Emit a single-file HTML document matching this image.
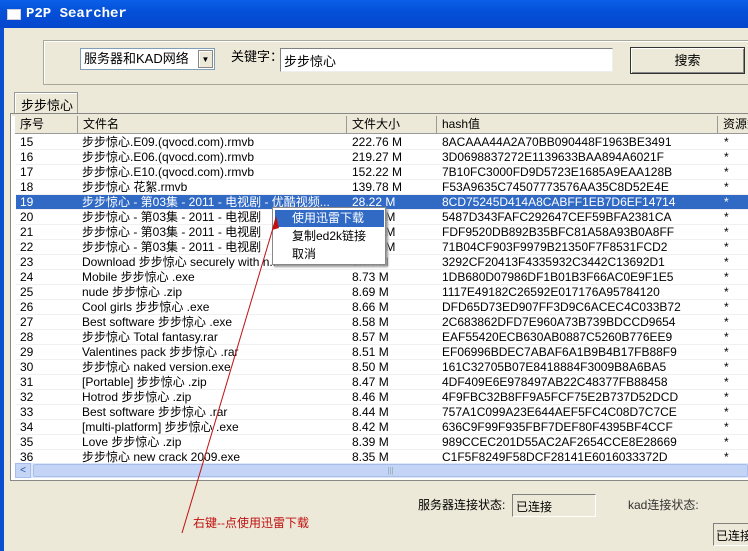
<!DOCTYPE html>
<html><head><meta charset="utf-8"><style>
*{margin:0;padding:0;box-sizing:border-box}
body{width:748px;height:551px;overflow:hidden;background:#ECE9D8;position:relative;font-family:"Liberation Sans","Noto Sans CJK SC",sans-serif;font-size:12px;color:#000}
.a{position:absolute;white-space:nowrap;overflow:hidden}
#title{left:0;top:0;width:748px;height:28px;background:linear-gradient(#0A5FE8,#0550D8 40%,#0347CC);color:#fff;font-family:"Liberation Mono","Noto Sans CJK SC",monospace;font-weight:bold;font-size:14px;line-height:28px;padding-left:26px}
.row{position:absolute;left:16px;width:732px;height:15px;line-height:15px;border-bottom:1px solid #f0f0f0;white-space:nowrap;overflow:hidden}
.row span{position:absolute;top:0}
.sel{background:#316AC5;color:#fff}
.hd{position:absolute;top:116px;height:18px;line-height:17px;background:#ECE9D8;border-right:1px solid #9a9a9a;border-bottom:1px solid #9a9a9a;padding-left:5px;white-space:nowrap;overflow:hidden}
</style></head><body>
<div id="title" class="a">P2P Searcher</div>
<div class="a" style="left:7px;top:9px;width:14px;height:11px;background:#fff;border:1px solid #ccd"></div>
<div class="a" style="left:0;top:28px;width:4px;height:523px;background:#0A4FD0"></div>
<div class="a" style="left:43px;top:40px;width:720px;height:45px;border:1px solid #a8a89a;border-right:none;box-shadow:inset 1px 1px #fff"></div>
<div class="a" style="left:80px;top:48px;width:135px;height:22px;background:#fff;border:1px solid #7f9db9;line-height:20px;padding-left:3px;font-size:13px">服务器和KAD网络</div>
<div class="a" style="left:198px;top:50px;width:15px;height:18px;background:#ECE9D8;border:1px solid #888;box-shadow:inset 1px 1px #fff;font-size:8px;text-align:center;line-height:17px">▼</div>
<div class="a" style="left:231px;top:50px;line-height:14px;font-size:13px">关键字：</div>
<div class="a" style="left:280px;top:48px;width:333px;height:24px;background:#fff;border:1px solid #808080;border-right-color:#eee;border-bottom-color:#eee;padding:2px 3px;font-size:13px">步步惊心</div>
<div class="a" style="left:630px;top:47px;width:115px;height:27px;background:#ECE9D8;border:1px solid #333;box-shadow:inset 1px 1px #fff,inset -1px -1px #888;text-align:center;line-height:25px;font-size:13px">搜索</div>
<div class="a" style="left:14px;top:92px;width:64px;height:22px;border:1px solid #999;border-bottom:none;box-shadow:inset 1px 1px #fff;padding:2px 6px;font-size:13px">步步惊心</div>
<div class="a" style="left:10px;top:113px;width:738px;height:368px;border:1px solid #888;border-right:none;background:#fff"></div>
<div class="a" style="left:12px;top:114px;width:736px;height:2px;background:#ECE9D8"></div>
<div class="hd" style="left:15px;width:63px">序号</div>
<div class="hd" style="left:78px;width:269px">文件名</div>
<div class="hd" style="left:347px;width:90px">文件大小</div>
<div class="hd" style="left:437px;width:281px">hash值</div>
<div class="hd" style="left:718px;width:40px">资源数</div>
<div id="rows"></div>
<script>
var d=[["15","步步惊心.E09.(qvocd.com).rmvb","222.76 M","8ACAAA44A2A70BB090448F1963BE3491"],
["16","步步惊心.E06.(qvocd.com).rmvb","219.27 M","3D0698837272E1139633BAA894A6021F"],
["17","步步惊心.E10.(qvocd.com).rmvb","152.22 M","7B10FC3000FD9D5723E1685A9EAA128B"],
["18","步步惊心 花絮.rmvb","139.78 M","F53A9635C74507773576AA35C8D52E4E"],
["19","步步惊心 - 第03集 - 2011 - 电视剧 - 优酷视频...","28.22 M","8CD75245D414A8CABFF1EB7D6EF14714"],
["20","步步惊心 - 第03集 - 2011 - 电视剧","28.21 M","5487D343FAFC292647CEF59BFA2381CA"],
["21","步步惊心 - 第03集 - 2011 - 电视剧","28.21 M","FDF9520DB892B35BFC81A58A93B0A8FF"],
["22","步步惊心 - 第03集 - 2011 - 电视剧","28.21 M","71B04CF903F9979B21350F7F8531FCD2"],
["23","Download 步步惊心 securely with n...","8.74 M","3292CF20413F4335932C3442C13692D1"],
["24","Mobile 步步惊心 .exe","8.73 M","1DB680D07986DF1B01B3F66AC0E9F1E5"],
["25","nude 步步惊心 .zip","8.69 M","1117E49182C26592E017176A95784120"],
["26","Cool girls 步步惊心 .exe","8.66 M","DFD65D73ED907FF3D9C6ACEC4C033B72"],
["27","Best software 步步惊心 .exe","8.58 M","2C683862DFD7E960A73B739BDCCD9654"],
["28","步步惊心  Total fantasy.rar","8.57 M","EAF55420ECB630AB0887C5260B776EE9"],
["29","Valentines pack 步步惊心 .rar","8.51 M","EF06996BDEC7ABAF6A1B9B4B17FB88F9"],
["30","步步惊心  naked version.exe","8.50 M","161C32705B07E8418884F3009B8A6BA5"],
["31","[Portable] 步步惊心 .zip","8.47 M","4DF409E6E978497AB22C48377FB88458"],
["32","Hotrod 步步惊心 .zip","8.46 M","4F9FBC32B8FF9A5FCF75E2B737D52DCD"],
["33","Best software 步步惊心 .rar","8.44 M","757A1C099A23E644AEF5FC4C08D7C7CE"],
["34","[multi-platform] 步步惊心 .exe","8.42 M","636C9F99F935FBF7DEF80F4395BF4CCF"],
["35","Love 步步惊心 .zip","8.39 M","989CCEC201D55AC2AF2654CCE8E28669"],
["36","步步惊心  new crack 2009.exe","8.35 M","C1F5F8249F58DCF28141E6016033372D"]];
var h="";d.forEach(function(r,i){h+='<div class="row'+(i==4?' sel':'')+'" style="top:'+(135+i*15)+'px"><span style="left:4px">'+r[0]+'</span><span style="left:66px">'+r[1]+'</span><span style="left:336px">'+r[2]+'</span><span style="left:426px">'+r[3]+'</span><span style="left:708px">*</span></div>';});
document.getElementById("rows").innerHTML=h;
</script>
<div class="a" style="left:15px;top:463px;width:733px;height:15px;background:#DCE7FA"></div>
<div class="a" style="left:15px;top:463px;width:16px;height:15px;background:#C5D5F5;border:1px solid #a8bde8;font-size:10px;color:#2a4fa8;text-align:center;line-height:13px">&lt;</div>
<div class="a" style="left:33px;top:464px;width:715px;height:13px;background:#C4D4F7;border:1px solid #a8bde8;border-radius:2px;text-align:center;font-size:8px;color:#8aa;line-height:12px">|||</div>
<div class="a" style="left:272px;top:207px;width:114px;height:58px;background:#fff;border:1px solid #888;box-shadow:2px 2px 2px #999;overflow:visible"></div>
<div class="a" style="left:275px;top:210px;width:109px;height:17px;background:#316AC5;color:#fff;padding-left:17px;line-height:17px">使用迅雷下载</div>
<div class="a" style="left:292px;top:229px;line-height:15px">复制ed2k链接</div>
<div class="a" style="left:292px;top:247px;line-height:15px">取消</div>
<div class="a" style="left:418px;top:496px">服务器连接状态:</div>
<div class="a" style="left:512px;top:494px;width:84px;height:23px;border:1px solid #808080;border-right-color:#fff;border-bottom-color:#fff;padding:3px 3px">已连接</div>
<div class="a" style="left:628px;top:496px;color:#333">kad连接状态:</div>
<div class="a" style="left:713px;top:523px;width:40px;height:23px;border:1px solid #808080;border-right:none;border-bottom-color:#fff;padding:3px 2px">已连接</div>
<div class="a" style="left:193px;top:514px;color:#C01010">右键--点使用迅雷下载</div>
<svg style="position:absolute;left:0;top:0" width="748" height="551"><line x1="182" y1="533" x2="276" y2="218" stroke="#C01010" stroke-width="1"/><polygon points="276,216 272,230 279,228" fill="#C01010"/></svg>
</body></html>
